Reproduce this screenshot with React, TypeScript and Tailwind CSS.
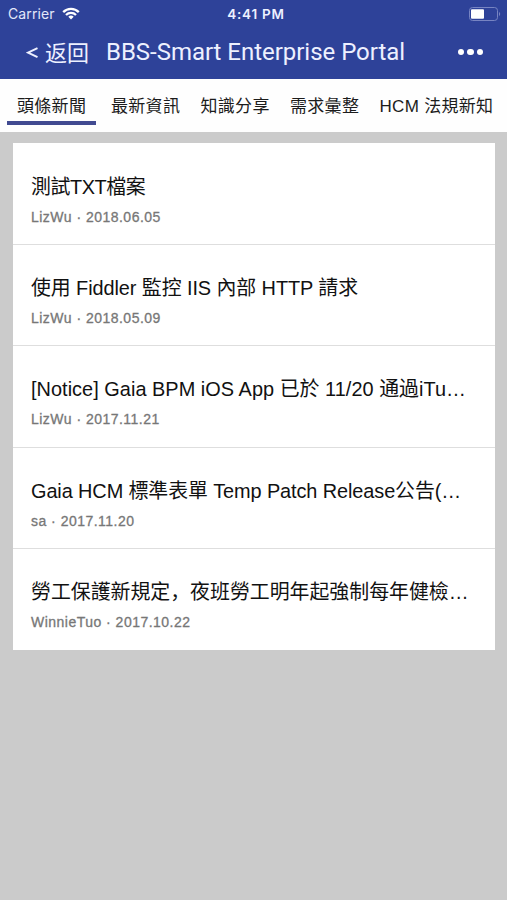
import clsx from "clsx";

interface NewsItem {
  title: string;
  titleClass: string;
  author: string;
  date: string;
}

const tabs = ["頭條新聞", "最新資訊", "知識分享", "需求彙整", "HCM 法規新知"];

const news: NewsItem[] = [
  { title: "測試TXT檔案", titleClass: "tracking-[-0.4px]", author: "LizWu", date: "2018.06.05" },
  { title: "使用 Fiddler 監控 IIS 內部 HTTP 請求", titleClass: "tracking-[-0.07px]", author: "LizWu", date: "2018.05.09" },
  { title: "[Notice] Gaia BPM iOS App 已於 11/20 通過iTu…", titleClass: "tracking-[0.04px]", author: "LizWu", date: "2017.11.21" },
  { title: "Gaia HCM 標準表單 Temp Patch Release公告(…", titleClass: "tracking-[-0.09px]", author: "sa", date: "2017.11.20" },
  { title: "勞工保護新規定，夜班勞工明年起強制每年健檢…", titleClass: "", author: "WinnieTuo", date: "2017.10.22" },
];

function WifiIcon() {
  return (
    <svg width="18" height="13" viewBox="0 0 18 13" fill="none" stroke="#fff" strokeWidth="2.3">
      <path d="M1.2 5.1a11 11 0 0 1 15.6 0" />
      <path d="M4 8a7.1 7.1 0 0 1 10 0" />
      <path d="M9 12.4 6.3 9.7a3.9 3.9 0 0 1 5.4 0Z" fill="#fff" stroke="none" />
    </svg>
  );
}

function BatteryIcon() {
  return (
    <svg width="32" height="14" viewBox="0 0 32 14">
      <rect x="0.5" y="0.5" width="28" height="13" rx="3" fill="none" stroke="#7784c2" />
      <rect x="2" y="2.2" width="13" height="9.6" rx="1" fill="#fff" />
      <path d="M30 5v4c1.6-.5 1.6-3.500 0-4Z" fill="#7784c2" />
    </svg>
  );
}

function Header() {
  return (
    <header className="h-[79px] bg-[#2e4299] text-white">
      <div className="grid h-[27px] grid-cols-3 items-center pr-[6px] pl-2 font-['Inter','Liberation_Sans',sans-serif]">
        <div className="flex items-center gap-[7px] text-[14px] text-[#e3e7fa]">
          <span className="tracking-[0.1px]">Carrier</span>
          <WifiIcon />
        </div>
        <span className="pt-px pl-[3px] text-center text-[13.5px] font-semibold tracking-[0.8px] text-[#edf0ff]">
          4:41 PM
        </span>
        <div className="flex justify-end">
          <BatteryIcon />
        </div>
      </div>
      <div className="flex h-[49px] items-center pl-[26px] text-[#edf0ff]">
        <div className="flex w-20 items-center gap-[7px] whitespace-nowrap">
          <svg width="12" height="12" viewBox="0 0 12 12" className="mt-[3px]" fill="none" stroke="currentColor" strokeWidth="2">
            <path d="M11.500 1.200 2 5.700l9.500 4.500" />
          </svg>
          <span className="text-[22px] font-['Noto_Sans_CJK_SC',sans-serif]">返回</span>
        </div>
        <h1 className="text-[24px] tracking-[-0.03px] whitespace-nowrap font-['Roboto',sans-serif]">
          BBS-Smart Enterprise Portal
        </h1>
        <div className="mr-[24px] ml-auto flex gap-[3px] pt-px">
          <i className="size-[6.500px] rounded-full bg-white" />
          <i className="size-[6.500px] rounded-full bg-white" />
          <i className="size-[6.500px] rounded-full bg-white" />
        </div>
      </div>
    </header>
  );
}

function Tabs() {
  return (
    <nav className="flex h-[53px] items-start bg-[#fefefe] pl-[7px] text-[17px] tracking-[0.3px] whitespace-nowrap text-[#1c1c1c]">
      {tabs.map((tab, i) => (
        <div
          key={tab}
          className={clsx(
            "mt-[9px] h-[37px] border-b-4 pl-[10px] leading-[38px]",
            i === 0 ? "mr-[5px] w-[89px] border-[#414a91]" : "w-[89.500px] border-transparent",
          )}
        >
          {tab}
        </div>
      ))}
    </nav>
  );
}

function NewsRow({ title, titleClass, author, date }: NewsItem) {
  return (
    <li className="h-[101.400px] border-b border-[#dedede] pt-[29px] pl-[18px] last:border-b-0">
      <h2 className={clsx("h-[29px] text-[19.900px] leading-[29px] whitespace-nowrap text-[#111]", titleClass)}>
        {title}
      </h2>
      <p className="mt-[5.200px] text-[14px] leading-5 tracking-[0.48px] text-[#777] [-webkit-text-stroke:0.3px_#777]">
        {author} · {date}
      </p>
    </li>
  );
}

export default function App() {
  return (
    <div className="h-[900px] w-[507px] overflow-hidden bg-[#cbcbcb] font-['Liberation_Sans','Noto_Sans_CJK_SC',sans-serif]">
      <Header />
      <Tabs />
      <ul className="mt-[11px] mr-3 ml-[13px] bg-white pt-[0.500px]">
        {news.map((item) => (
          <NewsRow key={item.title} {...item} />
        ))}
      </ul>
    </div>
  );
}
